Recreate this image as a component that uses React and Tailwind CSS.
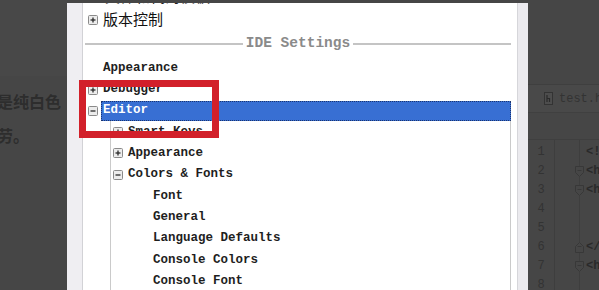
import React from 'react';

const mono = { fontFamily: '"Liberation Mono", "DejaVu Sans Mono", monospace' };
const cjk = { fontFamily: '"Noto Sans CJK SC", "Noto Sans", sans-serif' };

function Toggle({ open }) {
  return (
    <svg width="10" height="10" viewBox="0 0 10 10" className="shrink-0">
      <rect x="0.5" y="0.5" width="9" height="9" rx="1" fill="#ececec" stroke="#8a8a8a" />
      <path d="M2.5 5h5" stroke="#2a2a2a" strokeWidth="1.3" />
      {!open && <path d="M5 2.5v5" stroke="#2a2a2a" strokeWidth="1.3" />}
    </svg>
  );
}

function Row({ children, className = '' }) {
  return <div className={`flex items-center h-[21px] ${className}`}>{children}</div>;
}

function ChildRow({ children, className = '' }) {
  return <div className={`flex items-center h-[21.3px] ${className}`}>{children}</div>;
}

const colorsFonts = ['Font', 'General', 'Language Defaults', 'Console Colors', 'Console Font'];

export default function App() {
  return (
    <div className="relative w-[599px] h-[290px] overflow-hidden bg-[#464646] flex">
      {/* Backdrop text on the left */}
      <div className="w-[67px] shrink-0 flex flex-col">
        <div className="h-[76px] shrink-0 bg-[#484848]" />
        <div
          className="ml-[-3px] pt-[8px] text-[16px] font-bold leading-[34px] text-[#2d2d2d] whitespace-nowrap"
          style={cjk}
        >
          <div>是纯白色</div>
          <div>劳。</div>
        </div>
      </div>

      {/* Settings dialog */}
      <div className="w-[461px] shrink-0 mt-[3px] flex bg-white">
        <div className="w-[16px] bg-[#efeef2] border-r border-[#d2d2d6]" />
        <div className="flex-1 pr-[6px] overflow-hidden text-[12.5px] font-bold text-[#1e1e1e]" style={mono}>
          <div className="mt-[-17px]">
            <Row className="pl-[22px]">
              <span className="text-[15px] font-normal text-[#222]" style={cjk}>文件和代码模板</span>
            </Row>
          </div>
          <div className="mt-[2px]">
            <Row className="pl-[5px] gap-[5px]">
              <Toggle />
              <span className="text-[15px] font-normal text-[#111]" style={cjk}>版本控制</span>
            </Row>
          </div>
          <div className="flex items-center h-[28px] pl-[2px] gap-[3px]">
            <div className="flex-1 h-[2px] bg-[#c4c4c4]" />
            <span className="text-[14.5px] text-[#8a8a8a]">IDE Settings</span>
            <div className="flex-1 h-[2px] bg-[#c4c4c4]" />
          </div>
          <Row className="pl-[20px]">Appearance</Row>
          <Row className="pl-[5px] gap-[5px]">
            <Toggle />
            <span>Debugger</span>
          </Row>
          <Row className="pl-[5px] gap-[3px]">
            <Toggle open />
            <div className="flex-1 h-[20px] flex items-center pl-[1px] bg-[#386fd3] border border-dotted border-[#1b3570] text-white">
              Editor
            </div>
          </Row>
          <div className="ml-[27px] h-[200px] border-l border-r border-[#cacaca] pt-[0.5px]">
            <ChildRow className="pl-[2px] gap-[5px]">
              <Toggle />
              <span>Smart Keys</span>
            </ChildRow>
            <ChildRow className="pl-[2px] gap-[5px]">
              <Toggle />
              <span>Appearance</span>
            </ChildRow>
            <ChildRow className="pl-[2px] gap-[5px]">
              <Toggle open />
              <span>Colors &amp; Fonts</span>
            </ChildRow>
            {colorsFonts.map((item) => (
              <ChildRow key={item} className="pl-[42px]">
                {item}
              </ChildRow>
            ))}
          </div>
        </div>
        <div className="w-[11px] bg-[#ebeaee] border-l border-[#d6d6da]" />
      </div>

      {/* IDE behind the dialog */}
      <div className="flex-1 min-w-0 flex flex-col overflow-hidden">
        <div className="h-[85px] shrink-0 border-b border-[#3f3f3f]" />
        <div className="h-[28px] shrink-0 bg-[#494949] flex items-center pl-[16px] gap-[6px] border-b border-[#404040]">
          <svg width="9" height="13" viewBox="0 0 9 13" className="shrink-0">
            <rect x="0.5" y="0.5" width="8" height="12" fill="#4d4d4d" stroke="#333" />
            <path d="M3 3v7M3 6.5h2.5v3.5" stroke="#2a2a2a" strokeWidth="1.2" fill="none" />
          </svg>
          <span className="text-[12px] text-[#333] whitespace-nowrap" style={mono}>test.html</span>
        </div>
        <div className="h-[27px] shrink-0 border-b border-[#3f3f3f]" />
        <div className="flex-1 min-h-0 flex text-[12px] text-[#333]" style={mono}>
          <div className="w-[27px] shrink-0 border-r border-[#3e3e3e] flex flex-col items-center pt-[3px]">
            {[1, 2, 3, 4, 5, 6, 7, 8].map((n) => (
              <div key={n} className="h-[19px] shrink-0 leading-[19px]">{n}</div>
            ))}
          </div>
          <div className="w-[25px] shrink-0 border-r border-[#3e3e3e] flex flex-col items-end pt-[3px] mr-[-6px]">
            {[0, 1, 1, 0, 0, 2, 1, 0].map((k, i) => (
              <div key={i} className="h-[19px] shrink-0 flex items-center justify-end">
                {k > 0 && (
                  <svg width="9" height="11" viewBox="0 0 9 11" className="mr-[-5px] bg-[#464646]">
                    {k === 1 ? (
                      <path d="M0.5 0.5h8v6l-4 4l-4-4z" fill="none" stroke="#383838" />
                    ) : (
                      <path d="M0.5 10.5h8v-6l-4-4l-4 4z" fill="none" stroke="#383838" />
                    )}
                    <path d="M2.5 4.5h4" stroke="#383838" />
                  </svg>
                )}
              </div>
            ))}
          </div>
          <div className="flex-1 flex flex-col pt-[3px] pl-[12px] font-bold text-[#2a2a2a] whitespace-nowrap">
            {['<!', '<h', '<h', '', '', '</', '<h', ''].map((t, i) => (
              <div key={i} className="h-[19px] shrink-0 leading-[19px]">{t}</div>
            ))}
          </div>
        </div>
      </div>

      {/* Red highlight box */}
      <div className="absolute left-[79px] top-[80px] w-[140px] h-[58px] border-[7px] border-[#d2202a]" />
    </div>
  );
}
